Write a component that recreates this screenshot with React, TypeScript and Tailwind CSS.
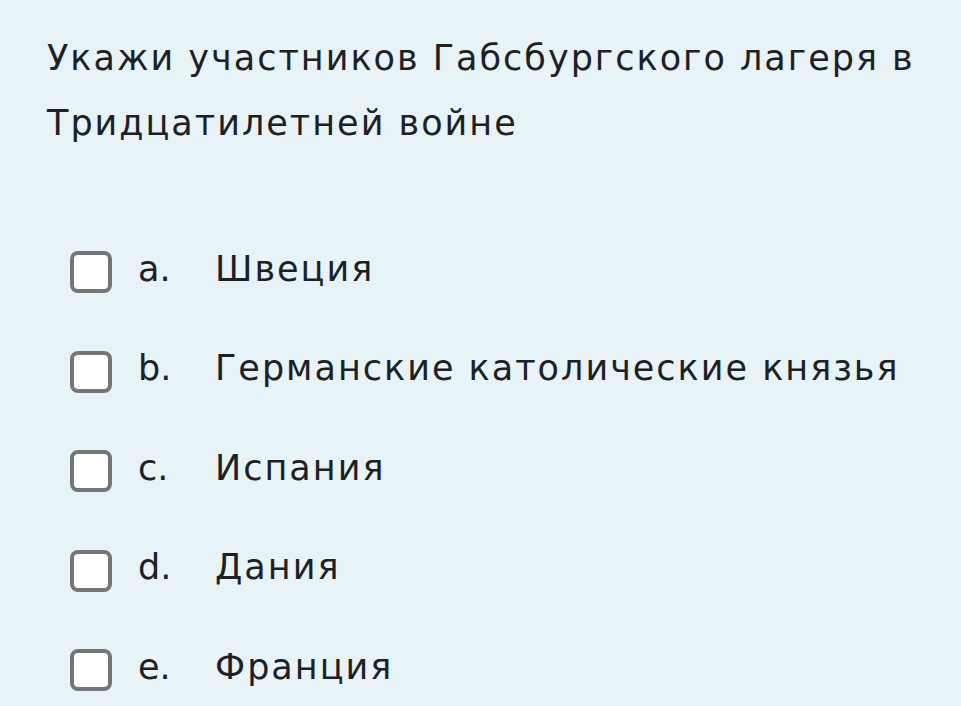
const options = [
  { letter: "a.", text: "Швеция" },
  { letter: "b.", text: "Германские католические князья" },
  { letter: "c.", text: "Испания" },
  { letter: "d.", text: "Дания" },
  { letter: "e.", text: "Франция" },
];

export default function App() {
  return (
    <div
      className="h-[706px] w-[961px] overflow-hidden bg-[#e7f3f6] text-[#1d2125]"
      style={{ fontFamily: "'DejaVu Sans', 'Noto Sans', sans-serif" }}
    >
      <div className="pl-[47px] pt-[26px] pr-2">
        <p className="text-[35px] leading-[65px] tracking-[2px]">
          Укажи участников Габсбургского лагеря в Тридцатилетней войне
        </p>
      </div>

      <div className="mt-[95px] flex flex-col gap-[57.5px] pl-[70px]">
        {options.map((o) => (
          <label key={o.letter} className="flex h-[42px] items-center">
            <span className="h-[42px] w-[42px] shrink-0 rounded-[8px] border-[4px] border-[#737679] bg-white" />
            <span className="ml-[26px] w-[77px] pb-[6px] text-[35px]">{o.letter}</span>
            <span className="pb-[6px] text-[35px] tracking-[2px]">{o.text}</span>
          </label>
        ))}
      </div>
    </div>
  );
}
